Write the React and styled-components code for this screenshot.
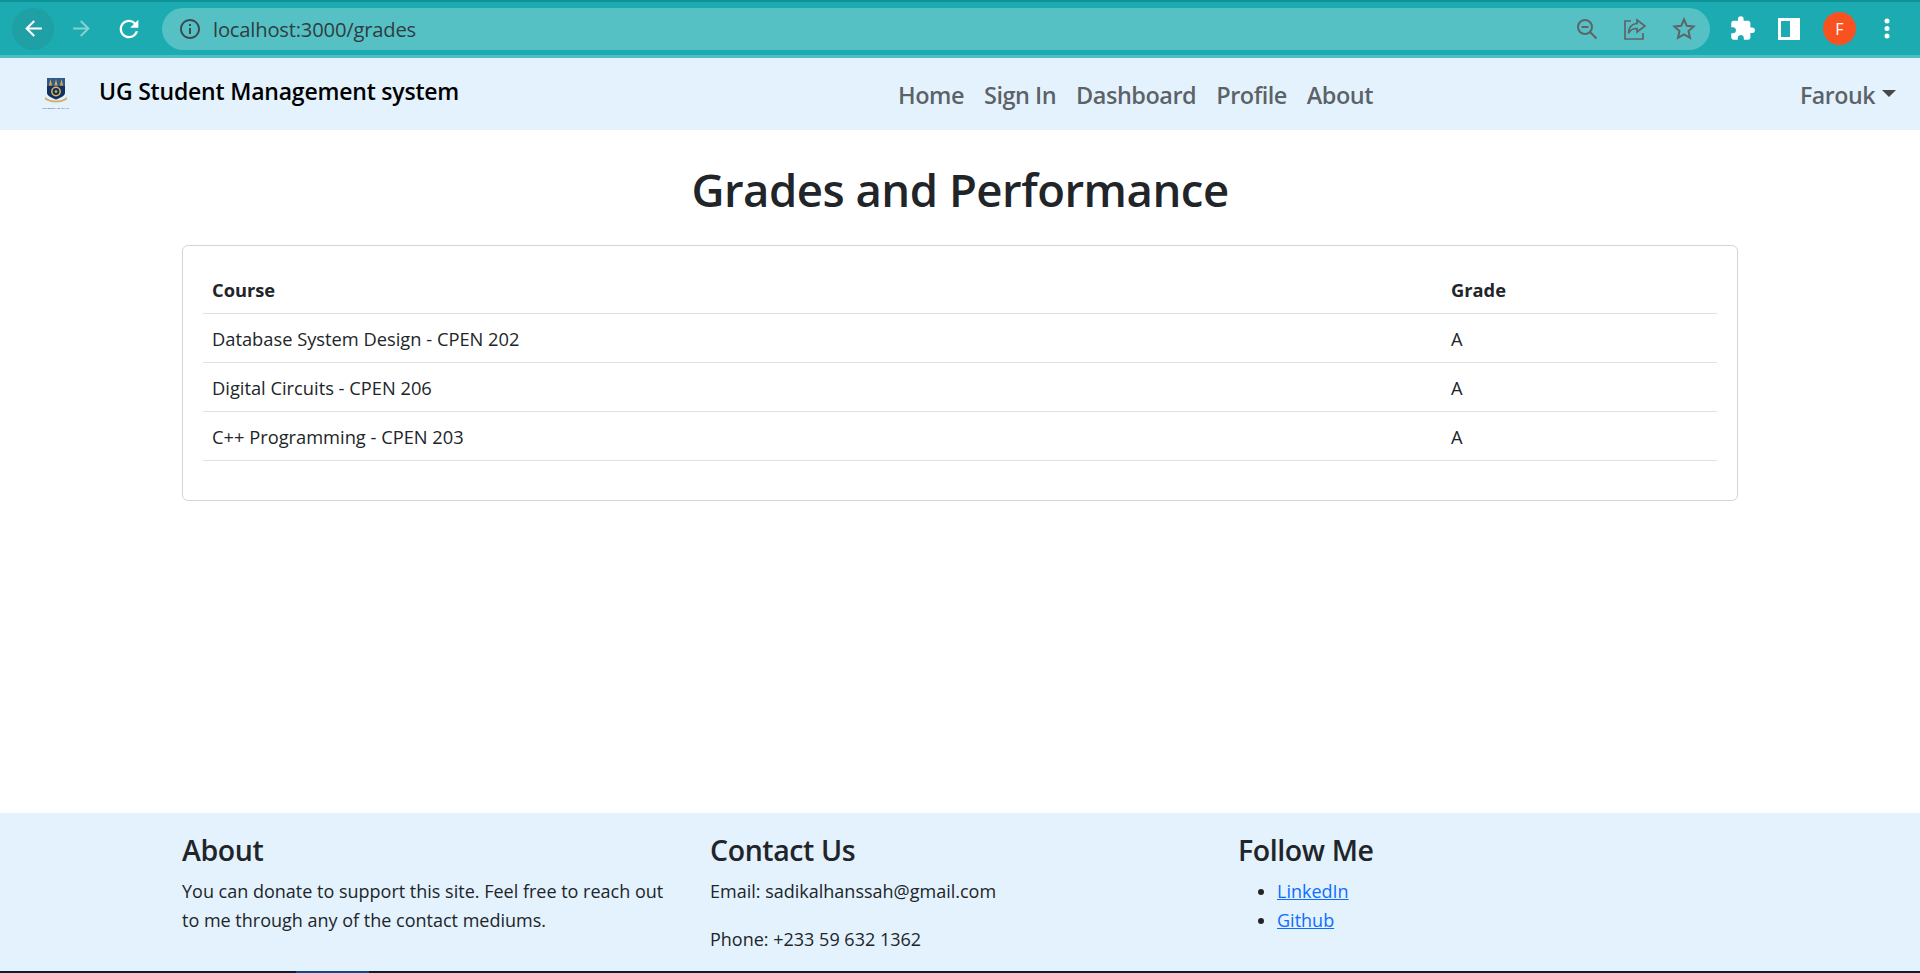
import React from 'react';
import styled, { createGlobalStyle } from 'styled-components';
import { MdArrowBack, MdArrowForward, MdRefresh, MdInfoOutline, MdExtension } from 'react-icons/md';

const GlobalStyle = createGlobalStyle`
  html, body {
    margin: 0;
    padding: 0;
    background: #fff;
    font-family: "Open Sans", "Liberation Sans", sans-serif;
    color: #212529;
  }
  * { box-sizing: border-box; }
`;

const grades = [
  { course: 'Database System Design - CPEN 202', grade: 'A' },
  { course: 'Digital Circuits - CPEN 206', grade: 'A' },
  { course: 'C++ Programming - CPEN 203', grade: 'A' },
];

const Crest = () => (
  <svg width="30" height="34" viewBox="0 0 30 34">
    <path d="M7 1h18v15c0 3-5 5-9 6.500-4-1.500-9-3.500-9-6.500z" fill="#12315f" />
    <rect x="7" y="1" width="18" height="8" fill="#2f5a8c" />
    <path d="M10.500 2l1.600 6.500h-3.200zM16 2l1.600 6.500h-3.200zM21.500 2l1.600 6.500h-3.200z" fill="#d9a94e" />
    <circle cx="16" cy="14.500" r="4.200" fill="none" stroke="#e0b355" strokeWidth="1.500" />
    <circle cx="16" cy="14.500" r="1.300" fill="#e0b355" />
    <path d="M5 20c3 2.500 6.500 3.500 11 3.500s8-1 11-3.500v2.500c-3 2-6.500 3-11 3s-8-1-11-3z" fill="#d4b26c" />
    <text x="16" y="32" fontSize="2.400" textAnchor="middle" fill="#3d4f74" fontFamily="Liberation Sans, sans-serif">UNIVERSITY OF GHANA</text>
  </svg>
);

const App = () => (
  <>
    <GlobalStyle />
    <Page>
      <BrowserBar>
        <RoundButton $active><MdArrowBack size={25} color="#fff" /></RoundButton>
        <RoundButton $dim><MdArrowForward size={25} color="#fff" /></RoundButton>
        <RoundButton><MdRefresh size={28} color="#fff" /></RoundButton>
        <AddressBar>
          <MdInfoOutline size={24} color="#3f4a4f" />
          <Url>localhost:3000/grades</Url>
          <AddressIcons>
            <svg width="22" height="22" viewBox="0 0 22 22" fill="none" stroke="#5d6468" strokeWidth="2">
              <circle cx="9" cy="9" r="7" />
              <path d="M5.500 9h7M14 14l6.500 6.500" />
            </svg>
            <svg width="24" height="22" viewBox="0 0 24 22" fill="none" stroke="#5d6468" strokeWidth="1.700">
              <path d="M8 3H2v18h18v-6" />
              <path d="M14 2l8 6-8 6v-3.500c-4 0-7 1.500-8.500 5 0-6 3.500-9.500 8.500-10z" />
            </svg>
            <svg width="24" height="23" viewBox="0 0 24 23" fill="none" stroke="#5d6468" strokeWidth="2" strokeLinejoin="miter">
              <path d="M12 2.500l2.800 6.300 6.800.7-5.100 4.600 1.500 6.700L12 17.300l-6 3.500 1.500-6.700L2.400 9.500l6.800-.7z" />
            </svg>
          </AddressIcons>
        </AddressBar>
        <ToolIcons>
          <MdExtension size={27} color="#fff" />
          <svg width="22" height="22" viewBox="0 0 22 22">
            <path fillRule="evenodd" d="M0 0h22v22H0zM3 3v16h9V3z" fill="#fff" />
          </svg>
          <Avatar>F</Avatar>
          <svg width="6" height="21" viewBox="0 0 6 21" fill="#fff">
            <circle cx="3" cy="3" r="2.500" />
            <circle cx="3" cy="10.500" r="2.500" />
            <circle cx="3" cy="18" r="2.500" />
          </svg>
        </ToolIcons>
      </BrowserBar>

      <Navbar>
        <Brand>
          <Crest />
          <BrandName>UG Student Management system</BrandName>
        </Brand>
        <NavLinks>
          <NavLink href="#">Home</NavLink>
          <NavLink href="#">Sign In</NavLink>
          <NavLink href="#">Dashboard</NavLink>
          <NavLink href="#">Profile</NavLink>
          <NavLink href="#">About</NavLink>
        </NavLinks>
        <UserMenu>Farouk<Caret /></UserMenu>
      </Navbar>

      <Main>
        <Title>Grades and Performance</Title>
        <Card>
          <Table>
            <thead>
              <tr>
                <HeadCell $wide>Course</HeadCell>
                <HeadCell>Grade</HeadCell>
              </tr>
            </thead>
            <tbody>
              {grades.map((row) => (
                <tr key={row.course}>
                  <Cell>{row.course}</Cell>
                  <Cell>{row.grade}</Cell>
                </tr>
              ))}
            </tbody>
          </Table>
        </Card>
      </Main>

      <Footer>
        <FooterInner>
          <FooterColumn>
            <FooterHeading>About</FooterHeading>
            <FooterText>You can donate to support this site. Feel free to reach out to me through any of the contact mediums.</FooterText>
          </FooterColumn>
          <FooterColumn>
            <FooterHeading>Contact Us</FooterHeading>
            <FooterText>Email: sadikalhanssah@gmail.com</FooterText>
            <FooterText>Phone: +233 59 632 1362</FooterText>
          </FooterColumn>
          <FooterColumn>
            <FooterHeading>Follow Me</FooterHeading>
            <LinkList>
              <li><FooterLink href="#">LinkedIn</FooterLink></li>
              <li><FooterLink href="#">Github</FooterLink></li>
            </LinkList>
          </FooterColumn>
        </FooterInner>
      </Footer>
      <BottomEdge><EdgeTab /></BottomEdge>
    </Page>
  </>
);

const Page = styled.div`
  height: 973px;
  display: flex;
  flex-direction: column;
  overflow: hidden;
`;

const BrowserBar = styled.header`
  height: 58px;
  flex: none;
  display: flex;
  align-items: center;
  padding: 0 0 0 12px;
  background: #1cabb0;
  border-top: 2px solid #0f9296;
  border-bottom: 3px solid #4fbec2;
`;

const RoundButton = styled.div`
  width: 42px;
  height: 42px;
  margin-right: 6px;
  border-radius: 50%;
  display: flex;
  align-items: center;
  justify-content: center;
  background: ${(p) => (p.$active ? '#1ea0a5' : 'transparent')};
  opacity: ${(p) => (p.$dim ? 0.45 : 1)};
`;

const AddressBar = styled.div`
  width: 1548px;
  height: 42px;
  margin-left: 6px;
  padding: 0 14px 0 16px;
  display: flex;
  align-items: center;
  border-radius: 21px;
  background: #56c1c4;
`;

const Url = styled.span`
  margin-left: 11px;
  font-size: 20.2px;
  color: #2f3d42;
  letter-spacing: -0.2px;
`;

const AddressIcons = styled.div`
  margin-left: auto;
  display: flex;
  align-items: center;
  gap: 25px;
`;

const ToolIcons = styled.div`
  margin-left: 19px;
  display: flex;
  align-items: center;
  gap: 22px;
`;

const Avatar = styled.div`
  width: 33px;
  height: 33px;
  margin: 0 6px 0 1px;
  border-radius: 50%;
  display: flex;
  align-items: center;
  justify-content: center;
  background: #f9511f;
  color: #fff;
  font-size: 16px;
`;

const Navbar = styled.nav`
  height: 72px;
  flex: none;
  display: flex;
  align-items: center;
  padding: 0 24px 0 40px;
  background: #e3f2fd;
`;

const Brand = styled.div`
  width: 858px;
  display: flex;
  align-items: center;
  gap: 29px;
`;

const BrandName = styled.span`
  font-size: 23px;
  font-weight: 600;
  color: #000;
  position: relative;
  top: -3px;
  letter-spacing: -0.2px;
`;

const NavLinks = styled.div`
  display: flex;
  gap: 20px;
  padding-top: 2px;
`;

const NavLink = styled.a`
  font-size: 23.5px;
  font-weight: 600;
  color: rgba(0, 0, 0, 0.62);
  text-decoration: none;
  letter-spacing: -0.5px;
`;

const UserMenu = styled.div`
  margin-left: auto;
  padding-top: 2px;
  display: flex;
  align-items: center;
  font-size: 23.2px;
  font-weight: 600;
  color: rgba(0, 0, 0, 0.62);
  letter-spacing: -0.5px;
`;

const Caret = styled.span`
  width: 0;
  height: 0;
  margin: 0 0 4px 7px;
  border-top: 7px solid rgba(0, 0, 0, 0.7);
  border-left: 7px solid transparent;
  border-right: 7px solid transparent;
`;

const Main = styled.main`
  flex: 1;
  padding: 0 182px;
`;

const Title = styled.h1`
  margin: 28px 0 24px;
  text-align: center;
  font-size: 45.5px;
  line-height: 63px;
  font-weight: 600;
  letter-spacing: -0.5px;
`;

const Card = styled.section`
  height: 256px;
  padding: 20px;
  border: 1px solid #d3d5d8;
  border-radius: 6px;
  background: #fff;
`;

const Table = styled.table`
  width: 100%;
  border-collapse: collapse;
  font-size: 18.3px;
`;

const HeadCell = styled.th`
  width: ${(p) => (p.$wide ? '1239px' : 'auto')};
  height: 47px;
  padding: 0 9px;
  text-align: left;
  font-weight: 700;
  border-bottom: 1px solid #dee2e6;
`;

const Cell = styled.td`
  height: 49px;
  padding: 1px 9px 0;
  border-bottom: 1px solid #dee2e6;
`;

const Footer = styled.footer`
  height: 158px;
  flex: none;
  background: #e3f2fd;
`;

const FooterInner = styled.div`
  display: grid;
  grid-template-columns: repeat(3, 528px);
  padding: 20px 0 0 182px;
`;

const FooterColumn = styled.div`
  padding-right: 40px;
`;

const FooterHeading = styled.h3`
  margin: 0 0 10px;
  font-size: 28.5px;
  line-height: 34px;
  font-weight: 600;
  letter-spacing: -0.4px;
`;

const FooterText = styled.p`
  margin: 0 0 19px;
  font-size: 18px;
  line-height: 29px;
  &:last-child { margin-bottom: 0; }
`;

const LinkList = styled.ul`
  margin: 0;
  padding: 0 0 0 39px;
  font-size: 18px;
  line-height: 29px;
`;

const FooterLink = styled.a`
  color: #0d6efd;
`;

const BottomEdge = styled.div`
  height: 2px;
  flex: none;
  padding-left: 296px;
  background: #0c1c2c;
`;

const EdgeTab = styled.div`
  width: 73px;
  height: 2px;
  background: #0a4a86;
`;

export default App;
